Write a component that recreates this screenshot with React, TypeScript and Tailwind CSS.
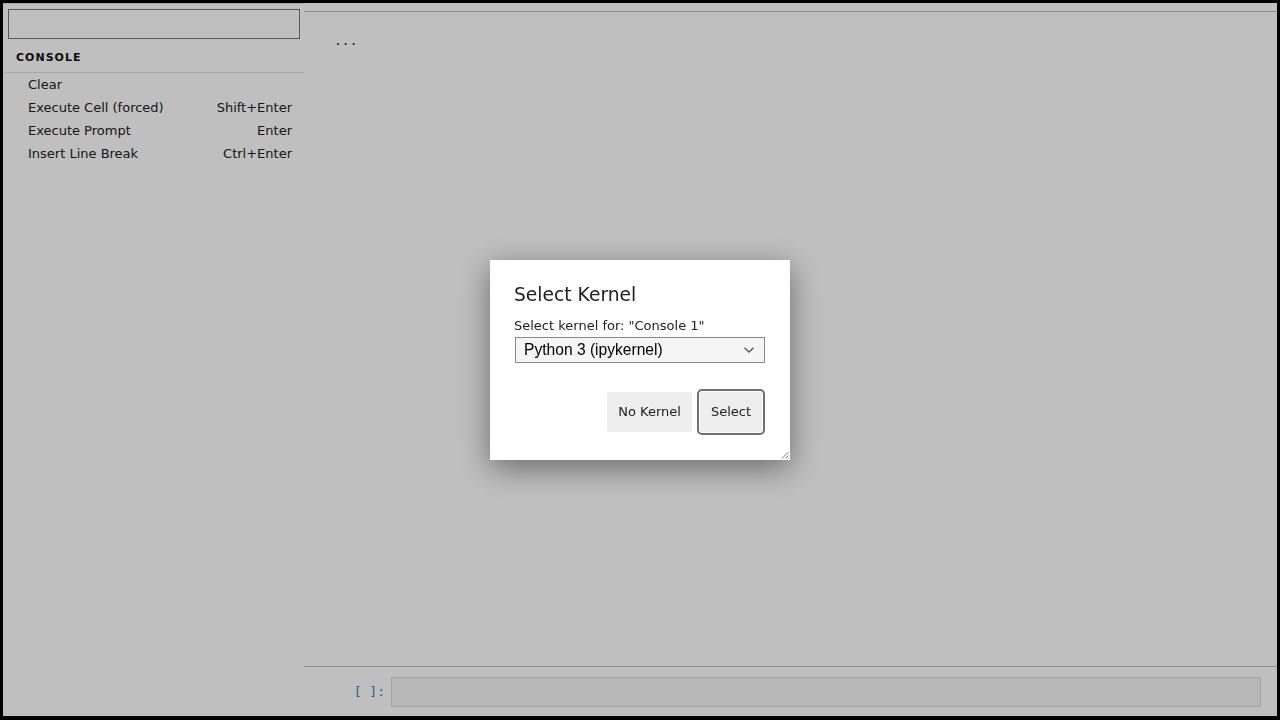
const COMMANDS = [
  { label: 'Clear', keys: '' },
  { label: 'Execute Cell (forced)', keys: 'Shift+Enter' },
  { label: 'Execute Prompt', keys: 'Enter' },
  { label: 'Insert Line Break', keys: 'Ctrl+Enter' },
]

function CommandPalette() {
  return (
    <aside className="w-[301px] shrink-0 flex flex-col border-t border-[#e0e0e0] bg-white">
      <div className="pt-[5px] pl-[5px] pr-[4px]">
        <input className="block w-full h-[30px] border border-[#757575] bg-white outline-none" />
      </div>
      <div className="h-[34px] flex items-center pl-[13px] pt-[5px] border-b border-[#e0e0e0]">
        <span className="text-[11px] font-bold tracking-[1px] text-[#111]">CONSOLE</span>
      </div>
      <ul>
        {COMMANDS.map((c) => (
          <li key={c.label} className="h-[23px] flex items-center justify-between pl-[25px] pr-[12px] text-[13px] text-[#212121]">
            <span>{c.label}</span>
            <span>{c.keys}</span>
          </li>
        ))}
      </ul>
    </aside>
  )
}

function ConsolePanel() {
  return (
    <main className="flex-1 flex flex-col pt-[8px] bg-white">
      <div className="flex-1 border-t border-[#bdbdbd] pl-[30px] pt-[16px]">
        <span className="text-[13px] text-[#212121] font-['DejaVu_Sans_Mono',monospace]">...</span>
      </div>
      <div className="border-t border-[#bdbdbd] flex items-start pt-[10px] pb-[9px] pr-[16px]">
        <div className="w-[87px] shrink-0 h-[30px] flex items-center justify-end pr-[6px] text-[13px] text-[#307fc1] font-['DejaVu_Sans_Mono',monospace]">
          [ ]:
        </div>
        <div className="flex-1 h-[30px] border border-[#dbdbdb] bg-[#f5f5f5]" />
      </div>
    </main>
  )
}

function KernelDialog() {
  return (
    <div className="fixed inset-0 bg-black/25 flex items-center justify-center">
      <div className="relative w-[300px] h-[200px] bg-white px-[24px] pt-[24px] shadow-[0_8px_30px_rgba(0,0,0,0.45)]">
        <h2 className="text-[18.7px] leading-[22px] text-[#212121]">Select Kernel</h2>
        <label className="block mt-[11px] text-[13px] leading-[17px] text-[#212121]">Select kernel for: "Console 1"</label>
        <div className="relative mt-[3px] ml-[1px] w-[250px]">
          <select className="block w-full h-[26px] appearance-none border border-[#8a8a8a] bg-[#f5f5f5] pl-[8px] text-[15.6px] text-black outline-none font-['Liberation_Sans',Arial,sans-serif]">
            <option>Python 3 (ipykernel)</option>
          </select>
          <svg className="absolute right-[10px] top-[9px]" width="12" height="8" viewBox="0 0 12 8" fill="none">
            <path d="M1.5 1.8 6 6 10.5 1.8" stroke="#555" strokeWidth="1.3" />
          </svg>
        </div>
        <div className="flex justify-end items-center gap-[5px] mt-[26px] mr-[1px]">
          <button className="h-[40px] px-[11px] bg-[#eeeeee] rounded-[2px] text-[13px] text-[#212121]">No Kernel</button>
          <span className="p-[1px] border-2 border-[#707070] rounded-[5px]">
            <button className="block h-[40px] px-[11px] bg-[#eeeeee] rounded-[2px] text-[13px] text-[#212121]">Select</button>
          </span>
        </div>
        <svg className="absolute right-[1px] bottom-[1px]" width="8" height="8" viewBox="0 0 8 8" fill="none">
          <path d="M7.5 1 1 7.5M7.5 4.5 4.5 7.5" stroke="#666" strokeWidth="0.9" />
        </svg>
      </div>
    </div>
  )
}

export default function App() {
  return (
    <div className="h-screen bg-black pt-[3px] px-[3px] pb-[4px] font-['DejaVu_Sans',sans-serif]">
      <div className="h-full flex bg-white">
        <CommandPalette />
        <ConsolePanel />
      </div>
      <KernelDialog />
    </div>
  )
}
